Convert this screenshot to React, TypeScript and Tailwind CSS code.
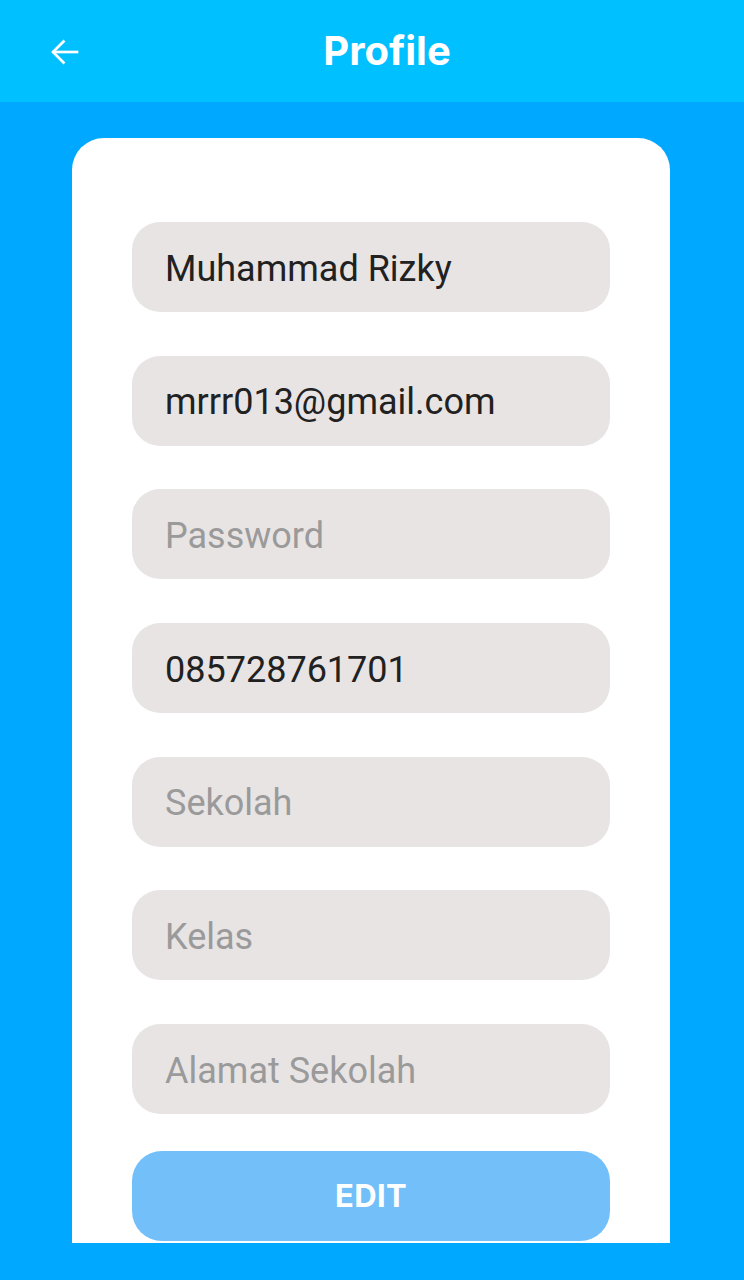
import React from 'react';

const fields = [
  { value: 'Muhammad Rizky', filled: true },
  { value: 'mrrr013@gmail.com', filled: true },
  { value: 'Password', filled: false },
  { value: '085728761701', filled: true },
  { value: 'Sekolah', filled: false },
  { value: 'Kelas', filled: false },
  { value: 'Alamat Sekolah', filled: false },
];

export default function App() {
  return (
    <div className="w-[744px] h-[1280px] bg-[#00a8ff] flex flex-col overflow-hidden" style={{ fontFamily: 'Roboto, "Noto Sans", sans-serif' }}>
      {/* Header */}
      <div className="h-[102px] bg-[#00c0ff] relative flex items-center justify-center shrink-0">
        <button className="absolute left-[46px] top-[33px] w-[38px] h-[38px] flex items-center justify-center">
          <svg width="36" height="36" viewBox="0 0 24 24" fill="none" stroke="white" strokeWidth="1.8" strokeLinecap="square">
            <path d="M20 12H4.5" />
            <path d="M11 5L4 12L11 19" />
          </svg>
        </button>
        <h1 className="text-white text-[40px] font-bold ml-[30px]" style={{ fontFamily: 'Inter, "Open Sans", sans-serif' }}>
          Profile
        </h1>
      </div>

      {/* Card */}
      <div className="mt-[36px] ml-[72px] w-[598px] bg-white rounded-t-[32px] pt-[84px] px-[60px] h-[1105px] flex flex-col gap-[43.7px]">
        {fields.map((f) => (
          <div key={f.value} className="h-[90px] rounded-[28px] bg-[#e8e4e4] flex items-center px-[33px] pt-[3px] shrink-0">
            <span className={`text-[36px] ${f.filled ? 'text-[#212121]' : 'text-[#9a9a9a]'}`}>{f.value}</span>
          </div>
        ))}
        <button className="-mt-[7px] h-[90px] rounded-[30px] bg-[#72bff9] flex items-center justify-center shrink-0">
          <span className="text-white text-[31px] font-bold tracking-[0.3px]" style={{ fontFamily: 'Inter, "Open Sans", sans-serif' }}>
            EDIT
          </span>
        </button>
      </div>
    </div>
  );
}
